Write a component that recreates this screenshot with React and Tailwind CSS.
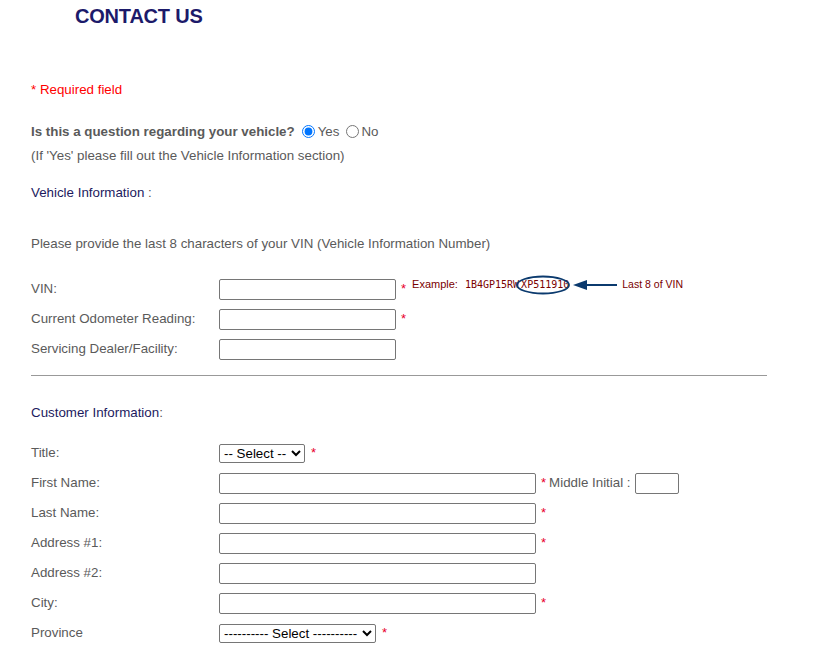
import { useState } from "react";

const labelCls = "w-[188px] shrink-0 text-[13.33px] text-[#5a5a5a]";
const inputCls = "h-[21px] border border-[#767676] rounded-[2px] bg-white px-1 text-[13px] outline-none";
const selectCls = "h-[19px] border border-[#767676] rounded-[2px] bg-white text-[13.33px] text-black";

function Star({ className = "" }) {
    return <span className={"text-[#e8002a] text-[13px] ml-[5px] " + className}>*</span>;
}

function Row({ label, children }) {
    return (
        <div className="flex items-center h-[30px]">
            <div className={labelCls}>{label}</div>
            <div className="flex items-center">{children}</div>
        </div>
    );
}

function VinExample() {
    return (
        <div className="relative flex items-center ml-[6px] mb-[9px] h-[20px] text-[#7a0000] text-[10px] font-['DejaVu_Sans_Mono','Liberation_Mono',monospace]">
            <span className="font-['Liberation_Sans',sans-serif] text-[11px] mr-[7px]">Example:</span>
            <span>1B4GP15RW</span>
            <span className="ml-[2px]">XP511910</span>
            <svg className="absolute left-[104px] top-[0px]" width="56" height="20" viewBox="0 0 56 20">
                <ellipse cx="27" cy="10" rx="26" ry="8.5" fill="none" stroke="#0b3a6e" strokeWidth="1.8" />
            </svg>
            <svg className="ml-[4px]" width="44" height="12" viewBox="0 0 44 12">
                <line x1="10" y1="6" x2="44" y2="6" stroke="#0b3a6e" strokeWidth="2" />
                <polygon points="0,6 14,1 14,11" fill="#0b3a6e" />
            </svg>
            <span className="ml-[5px] font-['Liberation_Sans',sans-serif] text-[10.5px]">Last 8 of VIN</span>
        </div>
    );
}

export default function App() {
    const [vehicle, setVehicle] = useState("yes");

    return (
        <div className="w-[828px] min-h-[648px] bg-white font-['Liberation_Sans',Arial,sans-serif] pl-[31px] pb-4">
            <div className="h-[32px] flex items-center ml-[44px]">
                <h1 className="text-[20px] font-bold text-[#1c1a6a] tracking-[-0.2px]">CONTACT US</h1>
            </div>

            <p className="mt-[48px] h-[20px] leading-[20px] text-[13.33px] text-[#f00]">* Required field</p>

            <div className="mt-[22px] h-[20px] flex items-center text-[13.33px] text-[#5a5a5a]">
                <span className="font-bold">Is this a question regarding your vehicle?</span>
                <label className="flex items-center ml-[7px]">
                    <input type="radio" name="veh" checked={vehicle === "yes"} onChange={() => setVehicle("yes")}
                        className="w-[13px] h-[13px] m-0 mr-[3px]" />
                    Yes
                </label>
                <label className="flex items-center ml-[7px]">
                    <input type="radio" name="veh" checked={vehicle === "no"} onChange={() => setVehicle("no")}
                        className="w-[13px] h-[13px] m-0 mr-[2px]" />
                    No
                </label>
            </div>
            <p className="mt-[4px] h-[20px] leading-[20px] text-[13.33px] text-[#5a5a5a]">(If 'Yes' please fill out the Vehicle Information section)</p>

            <p className="mt-[17px] h-[20px] leading-[20px] text-[13.33px] text-[#1c1a5e]">
                Vehicle Information <span className="text-[#5a5a5a]">:</span>
            </p>

            <p className="mt-[31px] h-[20px] leading-[20px] text-[13.33px] text-[#5a5a5a]">
                Please provide the last 8 characters of your VIN (Vehicle Information Number)
            </p>

            <div className="mt-[20px]">
                <Row label="VIN:">
                    <input className={inputCls + " w-[177px]"} />
                    <Star />
                    <VinExample />
                </Row>
                <Row label="Current Odometer Reading:">
                    <input className={inputCls + " w-[177px]"} />
                    <Star />
                </Row>
                <Row label="Servicing Dealer/Facility:">
                    <input className={inputCls + " w-[177px]"} />
                </Row>
            </div>

            <hr className="mt-[11px] w-[736px] border-0 border-t border-[#999]" />

            <p className="mt-[27px] h-[20px] leading-[20px] text-[13.33px] text-[#1c1a5e]">
                Customer Information<span className="text-[#5a5a5a]">:</span>
            </p>

            <div className="mt-[15px]">
                <Row label="Title:">
                    <select className={selectCls + " w-[86px]"}>
                        <option>-- Select --</option>
                        <option>Mr.</option>
                        <option>Mrs.</option>
                        <option>Ms.</option>
                    </select>
                    <Star className="ml-[6px]" />
                </Row>
                <Row label="First Name:">
                    <input className={inputCls + " w-[317px]"} />
                    <Star className="ml-[4px]" />
                    <span className="ml-[3px] text-[13.33px] text-[#5a5a5a]">Middle Initial :</span>
                    <input className={inputCls + " w-[44px] ml-[4px]"} />
                </Row>
                <Row label="Last Name:">
                    <input className={inputCls + " w-[317px]"} />
                    <Star />
                </Row>
                <Row label="Address #1:">
                    <input className={inputCls + " w-[317px]"} />
                    <Star />
                </Row>
                <Row label="Address #2:">
                    <input className={inputCls + " w-[317px]"} />
                </Row>
                <Row label="City:">
                    <input className={inputCls + " w-[317px]"} />
                    <Star />
                </Row>
                <Row label="Province">
                    <select className={selectCls + " w-[157px]"}>
                        <option>---------- Select ----------</option>
                        <option>Ontario</option>
                        <option>Quebec</option>
                    </select>
                    <Star className="ml-[6px]" />
                </Row>
            </div>
        </div>
    );
}
